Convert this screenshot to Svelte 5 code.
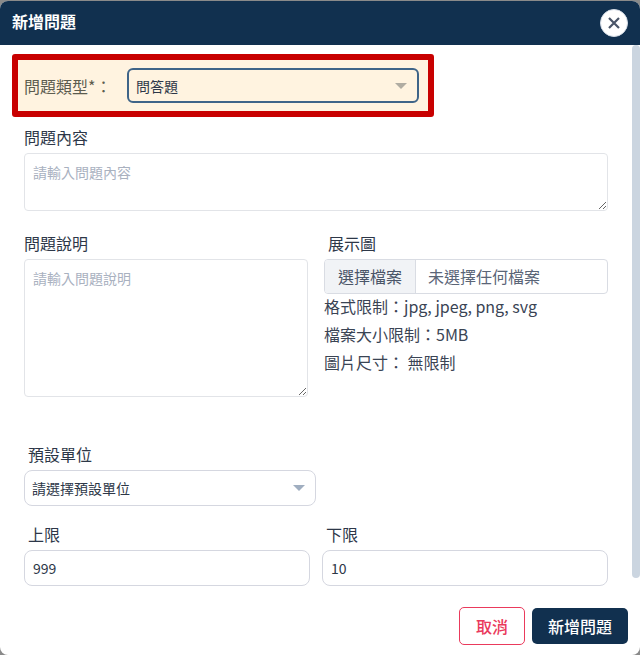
<script lang="ts">
  const limits = ["格式限制：jpg, jpeg, png, svg", "檔案大小限制：5MB", "圖片尺寸： 無限制"];
</script>

<div class="modal">
  <header class="head">
    <h2>新增問題</h2>
    <button class="close" aria-label="關閉">
      <svg width="14" height="14" viewBox="0 0 14 14"><path d="M2 2l10 10M12 2L2 12" /></svg>
    </button>
  </header>

  <div class="scroller">
    <div class="body">
      <div class="type-row">
        <span class="type-label">問題類型*：</span>
        <div class="select type-select">
          <span>問答題</span>
          <i class="caret"></i>
        </div>
      </div>

      <div class="field content-field">
        <span class="label">問題內容</span>
        <textarea class="content" placeholder="請輸入問題內容"></textarea>
      </div>

      <div class="two-col desc-row">
        <div class="field">
          <span class="label">問題說明</span>
          <textarea class="desc" placeholder="請輸入問題說明"></textarea>
        </div>
        <div class="field">
          <span class="label shift">展示圖</span>
          <div class="file">
            <span class="file-btn">選擇檔案</span>
            <span class="file-name">未選擇任何檔案</span>
          </div>
          <ul class="limits">
            {#each limits as line}
              <li>{line}</li>
            {/each}
          </ul>
        </div>
      </div>

      <div class="field unit">
        <span class="label shift">預設單位</span>
        <div class="select unit-select">
          <span>請選擇預設單位</span>
          <i class="caret"></i>
        </div>
      </div>

      <div class="two-col bounds">
        <div class="field">
          <span class="label shift">上限</span>
          <input class="input" value="999" />
        </div>
        <div class="field">
          <span class="label shift">下限</span>
          <input class="input" value="10" />
        </div>
      </div>
    </div>
    <div class="track"></div>
  </div>

  <footer class="foot">
    <button class="btn cancel">取消</button>
    <button class="btn primary">新增問題</button>
  </footer>
</div>

<style>
  :global(body) { margin: 0; background: #8a8a8a; }
  .modal {
    width: 640px; height: 654px; margin-top: 1px; background: #fff;
    border-radius: 8px; overflow: hidden; display: flex; flex-direction: column;
    font-family: "Noto Sans CJK TC", "Noto Sans", sans-serif; color: #2d3748;
  }
  .head {
    height: 44px; flex-shrink: 0; background: #11304f; color: #fff;
    display: flex; align-items: center; justify-content: space-between;
    padding: 0 12px;
  }
  .head h2 { margin: 0 0 4px; font-size: 16px; font-weight: 700; line-height: 40px; }
  .close {
    width: 28px; height: 28px; padding: 0; border-radius: 50%; background: #fff;
    border: 1px solid #d5dce6; display: flex; align-items: center; justify-content: center;
  }
  .close path { stroke: #4a5568; stroke-width: 2.2; fill: none; }

  .scroller { position: relative; height: 553px; flex-shrink: 0; overflow: hidden; }
  .track {
    position: absolute; top: 0; right: 0; width: 8px; height: 533px;
    background: #cbd5e0; border-radius: 4px;
  }
  .body { padding: 9px 32px 0 12px; }

  .type-row {
    width: 422px; height: 63px; box-sizing: border-box; border: 6px solid #c80000;
    border-radius: 3px; background: #fff3e0; display: flex; align-items: center;
    padding-left: 6px;
  }
  .type-label { width: 103px; font-size: 16px; color: #5c5c4f; }
  .select {
    box-sizing: border-box; display: flex; align-items: center; justify-content: space-between;
    font-size: 14px; border-radius: 6px;
  }
  .type-select {
    width: 292px; height: 35px; border: 2px solid #3f6488; padding: 0 10px 0 7px;
  }
  .caret {
    width: 0; height: 0; border-left: 6px solid transparent; border-right: 6px solid transparent;
    border-top: 6px solid #a0aec0;
  }
  .type-select .caret { border-top-color: #b0aca2; }

  .field { display: flex; flex-direction: column; }
  .label { font-size: 16px; line-height: 24px; }
  .label.shift { padding-left: 4px; }
  .content-field { margin: 8px 0 0 12px; }
  textarea {
    display: block; box-sizing: border-box; font: inherit; font-size: 14px; line-height: 21px;
    padding: 8px; background: #fff; border: 1px solid #e2e4e8; border-radius: 4px;
    margin: 0; outline: none;
  }
  textarea::placeholder { color: #a9b1bf; opacity: 1; }
  .content { width: 584px; height: 58px; margin-top: 4px; }

  .two-col { display: grid; gap: 16px; margin-left: 12px; }
  .desc-row { grid-template-columns: 284px 284px; margin-top: 20px; }
  .desc { width: 284px; height: 138px; margin-top: 4px; }

  .file {
    display: flex; height: 35px; box-sizing: border-box; margin-top: 4px;
    border: 1px solid #d9dce3; border-radius: 4px; overflow: hidden; font-size: 16px;
  }
  .file-btn {
    width: 91px; flex-shrink: 0; box-sizing: border-box; background: #f1f3f6;
    border-right: 1px solid #d9dce3; text-align: center; line-height: 32px; color: #4a5568;
  }
  .file-name { padding-left: 12px; line-height: 32px; color: #5a6577; }
  .limits { list-style: none; margin: -2px 0 0; padding: 0; font-size: 16px; line-height: 28px; color: #3a4454; }

  .unit { margin: 45px 0 0 12px; }
  .unit-select {
    width: 292px; height: 36px; margin-top: 4px; border: 1px solid #d5d7e0;
    border-radius: 8px; padding: 0 10px 0 7px; color: #2d3748;
  }
  .bounds { grid-template-columns: 286px 286px; gap: 12px; margin-top: 16px; }
  .input {
    box-sizing: border-box; width: 100%; height: 36px; margin-top: 4px; padding: 0 8px;
    border: 1px solid #d5d7e0; border-radius: 8px; font: inherit; font-size: 14px; color: #2d3748;
    outline: none;
  }

  .foot {
    flex: 1; display: flex; justify-content: flex-end; align-items: flex-start;
    gap: 7px; padding: 9px 12px 0 0;
  }
  .btn {
    box-sizing: border-box; font: inherit; font-size: 16px; font-weight: 500; border-radius: 5px;
    padding: 0; height: 38px; display: flex; align-items: center; justify-content: center;
  }
  .cancel { width: 66px; background: #fff; color: #ea3a5c; border: 1px solid #ea3a5c; }
  .primary { width: 96px; background: #11304f; color: #fff; border: none; height: 36px; margin-top: 1px; }
</style>
